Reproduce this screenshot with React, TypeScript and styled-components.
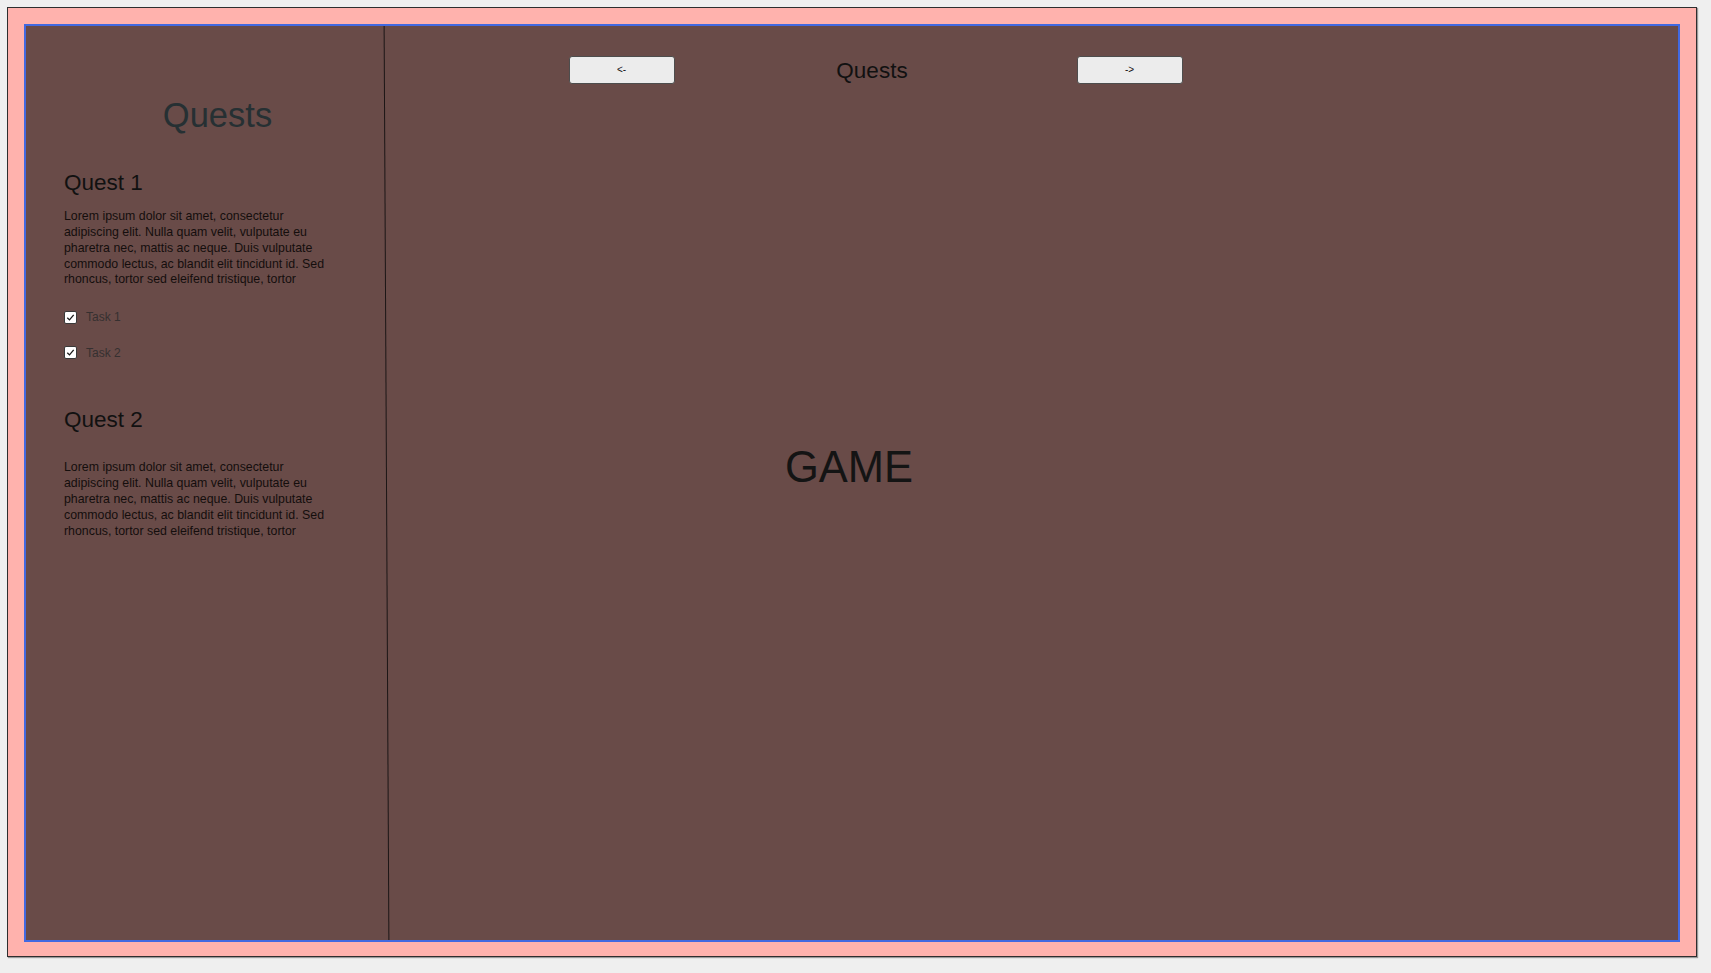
import React from "react";
import styled, { createGlobalStyle } from "styled-components";

const GlobalStyle = createGlobalStyle`
  html, body {
    margin: 0;
    padding: 0;
    background: #efefef;
    font-family: "Liberation Sans", Arial, Helvetica, sans-serif;
  }
`;

interface Quest {
  title: string;
  text: string;
  tasks: string[];
}

const LOREM =
  "Lorem ipsum dolor sit amet, consectetur adipiscing elit. Nulla quam velit, vulputate eu pharetra nec, mattis ac neque. Duis vulputate commodo lectus, ac blandit elit tincidunt id. Sed rhoncus, tortor sed eleifend tristique, tortor";

const QUESTS: Quest[] = [
  { title: "Quest 1", text: LOREM, tasks: ["Task 1", "Task 2"] },
  { title: "Quest 2", text: LOREM, tasks: [] },
];

const Check: React.FC = () => (
  <StyledCheck>
    <svg width="9" height="9" viewBox="0 0 9 9">
      <polyline
        points="1.3,4.7 3.5,6.9 7.7,1.8"
        fill="none"
        stroke="#1a1a1a"
        strokeWidth="1.3"
      />
    </svg>
  </StyledCheck>
);

const QuestItem: React.FC<{ quest: Quest; last: boolean }> = ({ quest, last }) => (
  <StyledQuest>
    <StyledQuestTitle>{quest.title}</StyledQuestTitle>
    <StyledQuestText $gap={quest.tasks.length ? 13 : 27}>{quest.text}</StyledQuestText>
    {quest.tasks.length > 0 && (
      <StyledTaskList $last={last}>
        {quest.tasks.map((t) => (
          <StyledTask key={t}>
            <Check />
            <span>{t}</span>
          </StyledTask>
        ))}
      </StyledTaskList>
    )}
  </StyledQuest>
);

export default function App() {
  return (
    <StyledPage>
      <GlobalStyle />
      <StyledFrame>
        <StyledBoard>
          <StyledSidebar>
            <StyledSideTitle>Quests</StyledSideTitle>
            {QUESTS.map((q, i) => (
              <QuestItem key={q.title} quest={q} last={i === QUESTS.length - 1} />
            ))}
          </StyledSidebar>
          <StyledDivider />
          <StyledMain>
            <StyledHeader>
              <StyledNavButton>{"<-"}</StyledNavButton>
              <StyledHeaderTitle>Quests</StyledHeaderTitle>
              <StyledNavButton>{"->"}</StyledNavButton>
            </StyledHeader>
            <StyledStage>GAME</StyledStage>
          </StyledMain>
        </StyledBoard>
      </StyledFrame>
    </StyledPage>
  );
}

const StyledPage = styled.div`
  padding: 7px 14px 7px 7px;
`;

const StyledFrame = styled.div`
  box-sizing: border-box;
  height: 950px;
  padding: 16px 16px 14px 16px;
  background: #ffb2ad;
  border: 1px solid #2e2e2e;
  box-shadow: 1px 1px 1px rgba(0, 0, 0, 0.35);
`;

const StyledBoard = styled.div`
  box-sizing: border-box;
  height: 100%;
  display: flex;
  background: #694b48;
  border: 2px solid #4169e1;
`;

const StyledSidebar = styled.div`
  box-sizing: border-box;
  width: 360px;
  flex-shrink: 0;
  padding: 69px 15px 0 38px;
`;

const StyledSideTitle = styled.h1`
  margin: 0;
  font-size: 34.5px;
  line-height: 40px;
  font-weight: normal;
  text-align: center;
  color: #263033;
`;

const StyledQuest = styled.section`
  &:first-of-type {
    margin-top: 35px;
  }
`;

const StyledQuestTitle = styled.h2`
  margin: 0;
  font-size: 22.5px;
  line-height: 26px;
  font-weight: normal;
  color: #111;
`;

const StyledQuestText = styled.p<{ $gap: number }>`
  width: 274px;
  margin: ${(p) => p.$gap}px 0 0;
  font-size: 12.35px;
  line-height: 15.86px;
  color: #140e0d;
`;

const StyledTaskList = styled.div<{ $last: boolean }>`
  display: flex;
  flex-direction: column;
  gap: 17.5px;
  margin: 20px 0 ${(p) => (p.$last ? 0 : 45.6)}px;
`;

const StyledTask = styled.label`
  display: flex;
  align-items: center;
  gap: 9px;
  height: 18px;
  font-size: 12px;
  color: #363030;
`;

const StyledCheck = styled.span`
  box-sizing: border-box;
  width: 13px;
  height: 13px;
  display: flex;
  align-items: center;
  justify-content: center;
  background: #fff;
  border: 1px solid #3a3a3a;
  border-radius: 2px;
`;

const StyledDivider = styled.div`
  width: 1px;
  flex-shrink: 0;
  background: #1c1616;
  transform: skewX(0.3deg);
`;

const StyledMain = styled.main`
  flex: 1;
  padding-top: 28px;
`;

const StyledHeader = styled.div`
  display: grid;
  grid-template-columns: 106px 402px 106px;
  align-items: center;
  margin-left: 181.5px;
`;

const StyledNavButton = styled.button`
  box-sizing: border-box;
  height: 28px;
  padding: 0;
  background: #ececec;
  border: 1px solid #4d4d4d;
  border-radius: 3px;
  font-family: "Liberation Sans", Arial, sans-serif;
  font-size: 10px;
  color: #111;
  cursor: pointer;
`;

const StyledHeaderTitle = styled.div`
  padding: 3px 7px 0 0;
  font-size: 22.5px;
  line-height: 28px;
  text-align: center;
  color: #111;
`;

const StyledStage = styled.div`
  width: 924px;
  margin-top: 358px;
  font-size: 43.5px;
  line-height: 48px;
  text-align: center;
  color: #141414;
`;
